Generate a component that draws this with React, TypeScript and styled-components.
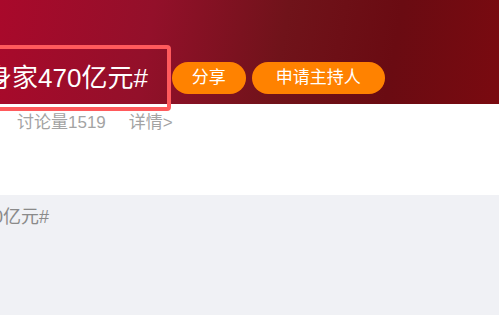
import React from "react";
import styled, { createGlobalStyle } from "styled-components";

const Global = createGlobalStyle`
  html, body { margin: 0; padding: 0; background: #ffffff; overflow: hidden; }
  body { font-family: "Liberation Sans", "Noto Sans CJK SC", sans-serif; }
`;

const Page = styled.div`
  width: 499px;
  height: 320px;
  display: flex;
  flex-direction: column;
  background: #ffffff;
  overflow: hidden;
`;

const Header = styled.header`
  height: 104px;
  flex: none;
  display: flex;
  align-items: flex-end;
  padding-bottom: 10px;
  box-sizing: border-box;
  background: linear-gradient(100deg, #a9092b 0%, #93102a 30%, #70131a 56%, #6a0b12 78%, #7a0a10 100%);
`;

const TitleRow = styled.div`
  display: flex;
  align-items: center;
  margin-left: -14px;
`;

const Title = styled.h1`
  position: relative;
  margin: 0 24px 0 0;
  font-size: 26px;
  line-height: 32px;
  font-weight: 400;
  color: #ffffff;
  white-space: nowrap;
  &::after {
    content: "";
    position: absolute;
    top: -17px;
    bottom: -17px;
    left: -20px;
    right: -23px;
    border: 4px solid #ff5a5c;
    border-radius: 4px;
  }
`;

const Pill = styled.button<{ $wide?: boolean }>`
  height: 32px;
  padding: 0 ${(p) => (p.$wide ? 24 : 20)}px;
  margin-right: 6px;
  border: none;
  border-radius: 16px;
  background: #ff8200;
  color: #ffffff;
  font-family: inherit;
  font-size: 17px;
  line-height: 32px;
  white-space: nowrap;
`;

const Meta = styled.div`
  display: flex;
  gap: 23px;
  padding: 8px 0 0 17px;
  font-size: 17px;
  line-height: 22px;
  color: #a3a3a3;
`;

const Spacer = styled.div`
  flex: 1;
`;

const Section = styled.section`
  height: 120px;
  flex: none;
  margin-bottom: 5px;
  background: #f0f1f5;
  padding-top: 9px;
  box-sizing: border-box;
`;

const SectionText = styled.p`
  margin: 0 0 0 -7px;
  font-size: 18px;
  line-height: 26px;
  color: #8a8a8a;
  white-space: nowrap;
`;

export default function App() {
  return (
    <Page>
      <Global />
      <Header>
        <TitleRow>
          <Title>身家470亿元#</Title>
          <Pill>分享</Pill>
          <Pill $wide>申请主持人</Pill>
        </TitleRow>
      </Header>
      <Meta>
        <span>讨论量1519</span>
        <span>详情&gt;</span>
      </Meta>
      <Spacer />
      <Section>
        <SectionText>0亿元#</SectionText>
      </Section>
    </Page>
  );
}
